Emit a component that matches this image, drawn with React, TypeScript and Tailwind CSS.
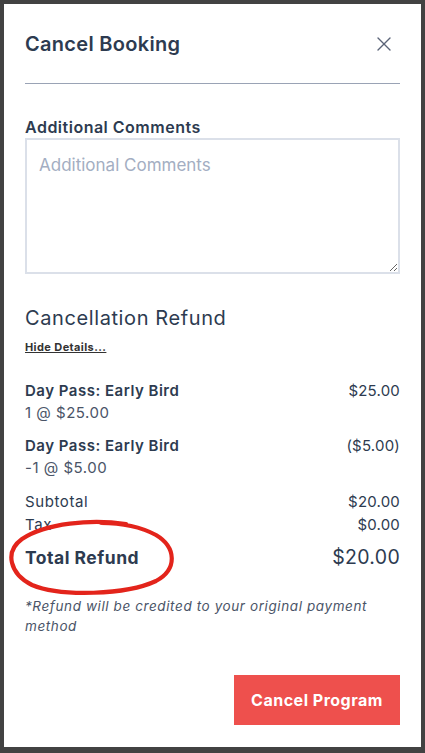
import { X } from "lucide-react";

interface Linea {
  nombre: string;
  detalle: string;
  monto: string;
}

const lineas: Linea[] = [
  { nombre: "Day Pass: Early Bird", detalle: "1 @ $25.00", monto: "$25.00" },
  { nombre: "Day Pass: Early Bird", detalle: "-1 @ $5.00", monto: "($5.00)" },
];

export default function App() {
  return (
    <div className="min-h-[753px] bg-[#424242] p-1 pb-[6px] font-['Inter','Noto_Sans',sans-serif] text-[#2d3b50]">
      <div className="bg-white h-[743px] px-[21px] flex flex-col">
        {/* Header */}
        <div className="flex items-center justify-between pt-[26px] pb-[25px] border-b border-[#9aa3b5]">
          <h2 className="text-[20px] font-semibold leading-[28px] tracking-[0.3px]">Cancel Booking</h2>
          <button className="text-[#5b6478] mr-[4px]" aria-label="Cerrar">
            <X className="w-[24px] h-[24px]" strokeWidth={1.4} />
          </button>
        </div>

        {/* Comentarios */}
        <label className="mt-[33px] text-[16px] font-semibold leading-[20px] tracking-[0.5px]">Additional Comments</label>
        <textarea
          className="mt-[1px] h-[136px] border-2 border-[#dbe0e9] px-[12px] py-[14px] text-[17px] leading-[22px] placeholder:text-[#a3aec2] outline-none resize-y"
          placeholder="Additional Comments"
        />

        {/* Reembolso */}
        <h3 className="mt-[30px] text-[20px] leading-[28px] tracking-[0.6px]">Cancellation Refund</h3>
        <a className="mt-[8px] text-[11px] font-bold underline leading-[14px] tracking-[0.4px] text-[#333]">Hide Details...</a>

        <div className="mt-[26px] flex flex-col gap-[11px] tracking-[0.5px]">
          {lineas.map((l, i) => (
            <div key={i} className="text-[15px] leading-[22px]">
              <div className="flex justify-between">
                <span className="font-semibold">{l.nombre}</span>
                <span className="tracking-[0.2px]">{l.monto}</span>
              </div>
              <div className="text-[#4a5467]">{l.detalle}</div>
            </div>
          ))}
        </div>

        <div className="mt-[11px] text-[15px] leading-[23px] tracking-[0.6px]">
          <div className="flex justify-between">
            <span>Subtotal</span>
            <span className="tracking-[0.2px]">$20.00</span>
          </div>
          <div className="flex justify-between">
            <span>Tax</span>
            <span className="tracking-[0.2px]">$0.00</span>
          </div>
        </div>

        <div className="relative mt-[10px] flex justify-between items-center h-[24px]">
          <span className="text-[17.5px] font-bold tracking-[0.5px]">Total Refund</span>
          <span className="text-[19.5px] tracking-[0.3px]">$20.00</span>
          {/* marca a mano */}
          <svg className="absolute left-[-19px] top-[-27px] w-[172px] h-[78px]" viewBox="0 0 172 78" fill="none">
            <path
              d="M120 5 C 85 0, 40 4, 16 20 C -2 33, 4 55, 26 66 C 55 78, 120 76, 150 62 C 172 50, 170 28, 150 16 C 135 8, 115 4, 95 4"
              stroke="#e3241b"
              strokeWidth="4.2"
              strokeLinecap="round"
            />
          </svg>
        </div>

        <p className="mt-[26px] text-[13.5px] italic leading-[20px] tracking-[0.6px] text-[#4a5467] pr-[20px]">
          *Refund will be credited to your original payment method
        </p>

        <div className="mt-auto mb-[22px] flex justify-end">
          <button className="w-[166px] h-[50px] bg-[#ee504d] text-white text-[16px] font-bold tracking-[0.5px]">
            Cancel Program
          </button>
        </div>
      </div>
    </div>
  );
}
